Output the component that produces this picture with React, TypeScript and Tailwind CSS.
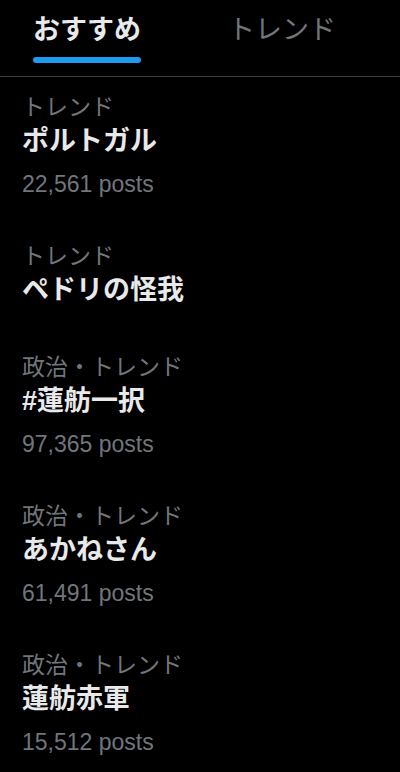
import React from "react";

type Trend = { category: string; title: string; posts?: string };

const trends: Trend[] = [
  { category: "トレンド", title: "ポルトガル", posts: "22,561 posts" },
  { category: "トレンド", title: "ペドリの怪我" },
  { category: "政治・トレンド", title: "#蓮舫一択", posts: "97,365 posts" },
  { category: "政治・トレンド", title: "あかねさん", posts: "61,491 posts" },
  { category: "政治・トレンド", title: "蓮舫赤軍", posts: "15,512 posts" },
];

const font = {
  fontFamily: '"Liberation Sans", "Noto Sans CJK JP", sans-serif',
};

export default function App() {
  return (
    <div className="w-[400px] h-[772px] bg-black overflow-hidden" style={font}>
      <div className="flex h-[77px] border-b border-[#3a3d40]">
        <div className="ml-[33px] flex flex-col">
          <div className="pt-[12px] h-[48px] leading-[36px] text-[27px] font-bold text-[#e7e9ea] whitespace-nowrap">
            おすすめ
          </div>
          <div className="mt-[9px] h-[6px] w-full rounded-full bg-[#1d9bf0]" />
        </div>
        <div className="ml-[87px] flex flex-col">
          <div className="pt-[12px] h-[48px] leading-[36px] text-[27px] text-[#71767b] whitespace-nowrap">
            トレンド
          </div>
        </div>
      </div>
      <div className="flex flex-col">
        {trends.map((t, i) => (
          <div key={i} className="pl-[22px] pt-[14px] pb-[29px] flex flex-col">
            <div className="h-[32px] leading-[32px] text-[23px] text-[#71767b] whitespace-nowrap">
              {t.category}
            </div>
            <div className="h-[36px] leading-[36px] text-[27px] font-bold text-[#e7e9ea] whitespace-nowrap">
              {t.title}
            </div>
            {t.posts && (
              <div className="mt-[12px] h-[26px] leading-[26px] text-[23px] text-[#71767b] whitespace-nowrap">
                {t.posts}
              </div>
            )}
          </div>
        ))}
      </div>
    </div>
  );
}
